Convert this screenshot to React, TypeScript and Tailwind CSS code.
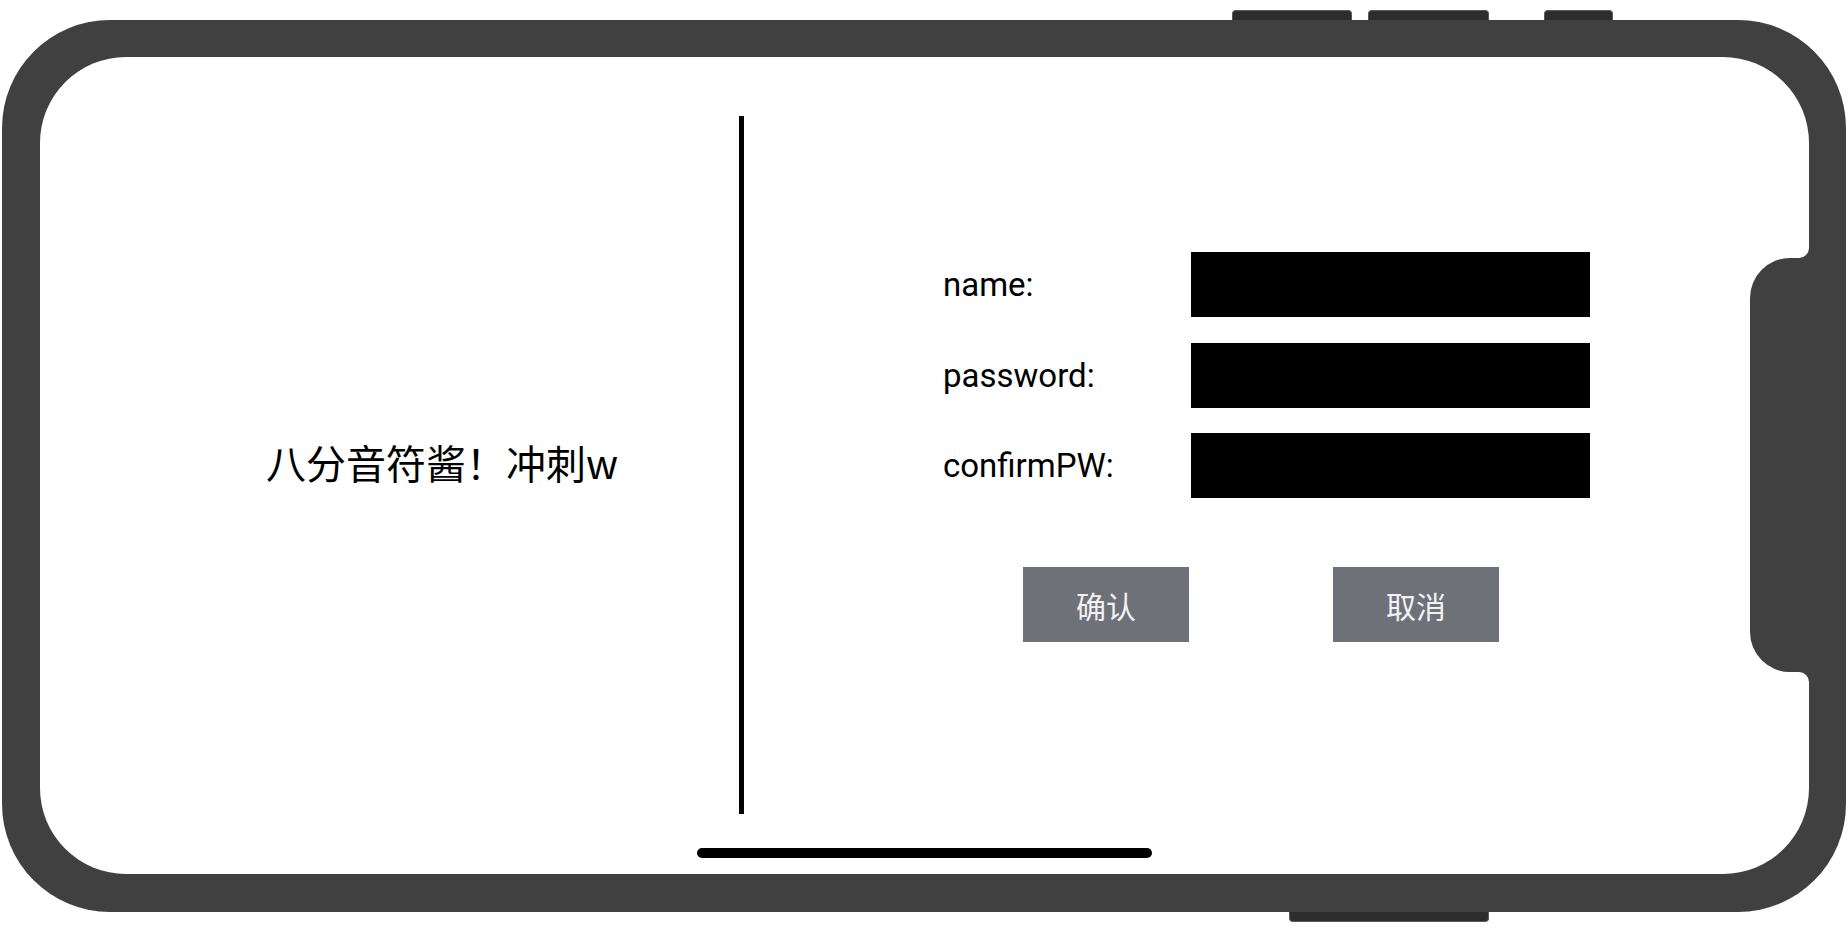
import React from "react";

const cjk = { fontFamily: '"Noto Sans CJK SC", "Noto Sans", sans-serif' };
const latin = { fontFamily: 'Roboto, "Noto Sans CJK SC", sans-serif' };

function Field({ label }: { label: string }) {
  return (
    <div className="flex items-center h-[65px]">
      <div className="w-[248px] text-[33px] leading-none text-black" style={latin}>
        {label}
      </div>
      <div className="w-[399px] h-[65px] bg-black" />
    </div>
  );
}

function Btn({ text }: { text: string }) {
  return (
    <div
      className="w-[166px] h-[75px] bg-[#6f7179] flex items-center justify-center text-[30px] leading-none text-[#f2f2f2]"
      style={cjk}
    >
      {text}
    </div>
  );
}

export default function App() {
  return (
    <div className="relative w-[1848px] h-[932px] bg-white overflow-hidden pt-[20px] pl-[2px]">
      {/* side buttons */}
      <div className="absolute left-[1232px] top-[10px] w-[120px] h-[12px] rounded-t-[4px] bg-[#2d2d2d] border border-b-0 border-[#5a5a5a]" />
      <div className="absolute left-[1368px] top-[10px] w-[121px] h-[12px] rounded-t-[4px] bg-[#2d2d2d] border border-b-0 border-[#5a5a5a]" />
      <div className="absolute left-[1544px] top-[10px] w-[69px] h-[12px] rounded-t-[4px] bg-[#2d2d2d] border border-b-0 border-[#5a5a5a]" />
      <div className="absolute left-[1289px] top-[910px] w-[200px] h-[12px] rounded-b-[4px] bg-[#2d2d2d] border border-t-0 border-[#5a5a5a]" />

      {/* phone frame */}
      <div className="relative w-[1844px] h-[892px] rounded-[108px] bg-[#404040] pt-[37px] pb-[38px] pl-[38px] pr-[37px]">
        <div className="relative w-full h-full bg-white rounded-[86px] flex overflow-hidden">
          {/* left */}
          <div className="w-[699px] shrink-0 flex items-center pl-[226px] pb-[8px]">
            <span className="text-[40px] leading-none text-black whitespace-nowrap" style={cjk}>
              八分音符酱！冲刺w
            </span>
          </div>
          {/* divider */}
          <div className="w-[5px] h-[698px] mt-[59px] bg-black shrink-0" />
          {/* right form */}
          <div className="flex-1 flex flex-col pl-[199px] pt-[195px]">
            <div className="flex flex-col gap-[25.5px]">
              <Field label="name:" />
              <Field label="password:" />
              <Field label="confirmPW:" />
            </div>
            <div className="mt-[69px] flex gap-[144px] pl-[80px]">
              <Btn text="确认" />
              <Btn text="取消" />
            </div>
          </div>
          {/* home indicator */}
          <div className="absolute left-[657px] top-[791px] w-[455px] h-[10px] rounded-full bg-black" />
        </div>
        {/* sensor housing */}
        <svg
          className="absolute left-[1748px] top-[228px]"
          width="70"
          height="434"
          viewBox="0 0 70 434"
        >
          <path
            d="M59 0 A10 10 0 0 1 49 10 L40 10 A40 40 0 0 0 0 50 L0 384 A40 40 0 0 0 40 424 L49 424 A10 10 0 0 1 59 434 L70 434 L70 0 Z"
            fill="#404040"
          />
        </svg>
      </div>
    </div>
  );
}
